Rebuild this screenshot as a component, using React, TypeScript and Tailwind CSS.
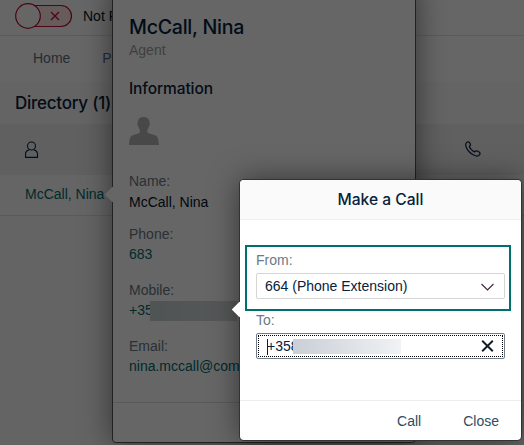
import React from 'react';

type Field = {
  label: string;
  value: string;
  className: string;
  valueClass: string;
  masked?: boolean;
};

const fields: Field[] = [
  { label: 'Name:', value: 'McCall, Nina', className: 'h-[53px]', valueClass: 'text-[#00142b] pt-px' },
  { label: 'Phone:', value: '683', className: 'h-14', valueClass: 'text-[#006b6b]' },
  { label: 'Mobile:', value: '+358', className: 'h-14', valueClass: 'text-[#006b6b]', masked: true },
  { label: 'Email:', value: 'nina.mccall@com', className: 'h-10', valueClass: 'text-[#006b6b]' },
];

const PersonIcon = () => (
  <svg width="14" height="18" viewBox="0 0 14 18" fill="none" stroke="#0b2540" strokeWidth="1.1">
    <circle cx="6.5" cy="5" r="4" />
    <path d="M4 8.9C1.6 9.6.5 11.2.5 13.4V16.4H12.5V13.4C12.5 11.2 11.4 9.6 9 8.9" />
  </svg>
);

const PhoneIcon = () => (
  <svg className="mb-0.5" width="16" height="16" viewBox="0 0 16 16" fill="none" stroke="#0b2540" strokeWidth="1.2" strokeLinejoin="round">
    <path d="M1.7 1.4C2.9.4 4 .7 4.9 2.1C5.9 3.7 5.7 4.4 4.4 5.5C4.9 7.4 7.6 10.3 9.5 11C10.6 9.7 11.4 9.5 13 10.3C15 11.3 15.5 12.4 14.6 13.6C13.4 15.3 11 15.4 8.7 14.1C5 12.1 2 8.8.9 5.2C.4 3.4.5 2.3 1.7 1.4Z" />
  </svg>
);

const Avatar = () => (
  <svg width="30" height="28" viewBox="0 0 30 28" fill="#b5b5b5">
    <path d="M14.5 0C18.6 0 20.9 2.6 20.5 6.2C21.1 6.5 20.9 8.9 19.8 9.4C19.5 11 19 12 18.4 13V15.2C20 17.4 26.2 17.2 28 19.4C29.3 21 29.6 25 30 28H0C.2 25 .5 21 1.8 19.4C3.6 17.2 9.4 17.4 11 15.2V13C10.3 12 9.7 11 9.4 9.4C8.3 8.9 8.1 6.5 8.7 6.2C8.4 2.6 10.6 0 14.5 0Z" />
  </svg>
);

const Directory = () => (
  <div className="h-full bg-[#f9f9f9]">
    <div className="flex h-9 items-start border-b border-[#e5e5e5] bg-white pl-[15px] pt-[3px]">
      <svg width="58" height="26" viewBox="0 0 58 26" fill="none" stroke="#bb0d34" strokeWidth="1.2">
        <rect x="1.5" y="2.5" width="55" height="21" rx="10.5" fill="#ffe5e5" />
        <circle cx="13" cy="13" r="12.3" fill="#fff" />
        <path d="M36 9L44 17M44 9L36 17" strokeWidth="1.3" />
      </svg>
      <span className="ml-[10px] mt-[3px] whitespace-nowrap leading-5 text-[#00142b]">Not R</span>
    </div>
    <nav className="flex h-[45px] items-center gap-8 bg-white pb-px pl-[33px] text-[#5c7080]">
      <span>Home</span>
      <span>P</span>
    </nav>
    <div className="flex h-[43px] items-center bg-[#fafafa] pl-[15px] pt-px font-['Inter'] text-[17px] font-medium tracking-[-0.25px] text-[#06223c]">
      Directory (1)
    </div>
    <div className="flex h-[51px] items-center justify-between bg-[#efefef] pl-[25px] pr-[43px]">
      <PersonIcon />
      <PhoneIcon />
    </div>
    <div className="flex h-[41px] items-center border-b border-[#e2e2e2] bg-[#fcfcfc] pl-[25px] pb-0.5 text-[#006b6b]">
      McCall, Nina
    </div>
  </div>
);

const ContactCard = () => (
  <div className="absolute -top-4 left-[112px] h-[459px] w-[304px] rounded border border-[#555] bg-white shadow-[0_0_30px_rgba(0,0,0,0.5)]">
    <div className="absolute -left-[6px] top-[204px] size-[11px] rotate-45 bg-white" />
    <div className="relative flex h-[418px] flex-col border-b border-[#dedede] pl-4 pt-7">
      <h2 className="h-[25px] font-['Inter'] text-[19.6px] leading-7 font-medium tracking-[-0.25px] text-[#06223c]">McCall, Nina</h2>
      <span className="mt-[2px] h-5 leading-5 text-[#9c9fa1]">Agent</span>
      <h3 className="mt-[17px] font-['Inter'] text-[15.5px] leading-6 font-medium tracking-[-0.1px] text-[#06223c]">Information</h3>
      <div className="mt-4 h-7">
        <Avatar />
      </div>
      <div className="mt-[26px] flex flex-col">
        {fields.map((f) => (
          <div key={f.label} className={`${f.className} leading-5`}>
            <div className="text-[#6a7884]">{f.label}</div>
            <div className={`relative whitespace-nowrap ${f.valueClass}`}>
              {f.value}
              {f.masked && (
                <div className="absolute left-[21px] top-px h-5 w-[87px] bg-linear-to-r from-[#c5d1d1] to-[#d8dede]" />
              )}
            </div>
          </div>
        ))}
      </div>
    </div>
  </div>
);

const CallDialog = () => (
  <div className="absolute left-[240px] top-[180px] h-[260px] w-[281px] rounded bg-white shadow-[0_0_0_1px_#333,0_0_30px_rgba(0,0,0,0.5)]">
    <div className="absolute -left-[6px] top-[124px] size-[11px] rotate-45 bg-white" />
    <div className="relative flex h-full flex-col">
      <div className="flex h-10 items-center justify-center rounded-t border-b border-[#ededed] bg-[#fafafa] pt-0.5 font-['Inter'] text-[15.6px] font-medium text-[#06223c]">
        Make a Call
      </div>
      <div className="h-[181px] border-b border-[#ededed] pl-[5px] pt-[25px]">
        <div className="h-[66px] w-[266px] border-2 border-[#00706c] pl-[9px] pt-[3px]">
          <div className="leading-5 text-[#6a7b89]">From:</div>
          <div className="mt-[3px] flex h-[26px] w-[249px] items-center justify-between rounded-xs border border-[#d5d5d5] pl-2 pr-[10px] text-[#06223c]">
            <span>664 (Phone Extension)</span>
            <svg className="mt-0.5" width="13" height="8" viewBox="0 0 13 8" fill="none" stroke="#43203f" strokeWidth="1.1">
              <path d="M.5 1L6.5 7L12.5 1" />
            </svg>
          </div>
        </div>
        <div className="-mt-px pl-[11px]">
          <div className="leading-5 text-[#6a7b89]">To:</div>
          <div className="mt-[3px] h-[26px] w-[249px] rounded-xs border border-[#6f7d8d] p-px">
            <div className="relative flex h-full items-center justify-between border border-dotted border-black pl-2 pr-2 text-[#06223c]">
              <span className="relative">
                <i className="absolute left-0 top-[3px] h-4 w-px bg-[#06223c]" />
                +358
              </span>
              <div className="absolute left-[34px] top-[3px] h-[15px] w-[108px] bg-linear-to-r from-[#cacfd7] to-[#f0f2f4]" />
              <svg width="13" height="12" viewBox="0 0 13 12" fill="none" stroke="#111c26" strokeWidth="2">
                <path d="M1.2 .8L11.8 11.2M11.8 .8L1.2 11.2" />
              </svg>
            </div>
          </div>
        </div>
      </div>
      <div className="flex flex-1 items-center justify-end gap-[42px] pr-[22px] text-[#304b62]">
        <button>Call</button>
        <button>Close</button>
      </div>
    </div>
  </div>
);

const App: React.FC = () => {
  return (
    <div className="relative h-[445px] w-[524px] overflow-hidden font-['Liberation_Sans',sans-serif] text-sm">
      <Directory />
      <ContactCard />
      {/* modal backdrop */}
      <div className="absolute inset-0 bg-black/60" />
      <CallDialog />
    </div>
  );
};

export default App;
